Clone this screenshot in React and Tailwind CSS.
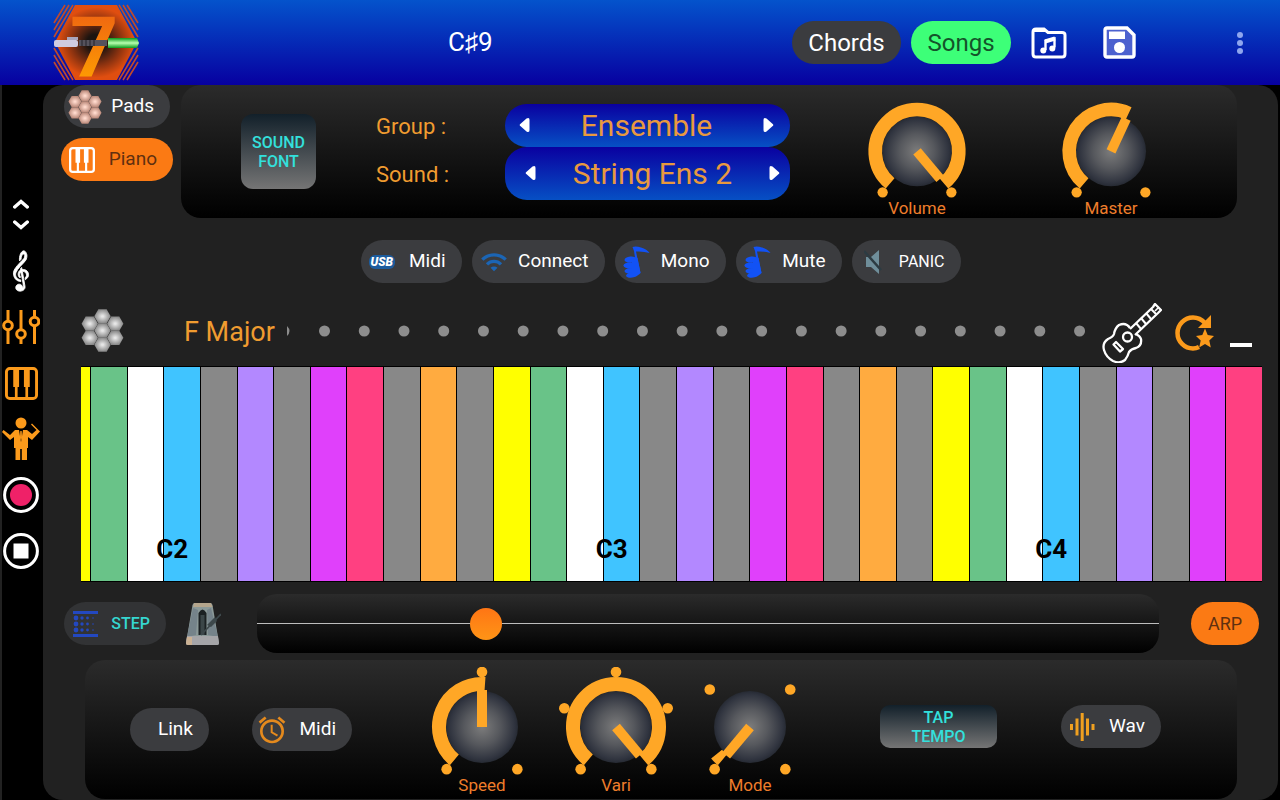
import { useState } from 'react';
import { MdAlarm, MdWifi } from 'react-icons/md';
import { GiGClef } from 'react-icons/gi';

const NOTE_COLORS = [
  'bg-[#69c388]',
  'bg-white',
  'bg-[#40c4ff]',
  'bg-[#888888]',
  'bg-[#b388ff]',
  'bg-[#888888]',
  'bg-[#e040fb]',
  'bg-[#ff4081]',
  'bg-[#888888]',
  'bg-[#ffab40]',
  'bg-[#888888]',
  'bg-[#ffff00]'
];

const KEYS = Array.from({ length: 32 }, (_, i) => ({
  id: i,
  color: NOTE_COLORS[i % 12],
  label: i % 12 === 2 ? `C${2 + Math.floor(i / 12)}` : null
}));

const polar = (angle, r) => {
  const rad = (angle * Math.PI) / 180;
  return [Math.sin(rad) * r, -Math.cos(rad) * r];
};

// Rotary knob, angles in degrees clockwise from the top
function Knob({ label, end, pointer = end, ticks }) {
  const [x1, y1] = polar(-140, 43);
  const [x2, y2] = polar(end, 43);
  const large = end + 140 > 180 ? 1 : 0;
  return (
    <label className="relative flex w-[116px] flex-col items-center text-[17px] leading-5 text-[#ee7d2b]">
      <input type="range" min="-140" max="140" defaultValue={Math.round(end)} className="sr-only" />
      <svg className="h-[108px] w-[116px]" viewBox="-58 -60 116 108">
        <defs>
          <radialGradient id={`knob-${label}`}>
            <stop offset="0" stopColor="#7c7c7c" />
            <stop offset="0.5" stopColor="#56585d" />
            <stop offset="0.9" stopColor="#30343f" />
            <stop offset="1" stopColor="#262a33" />
          </radialGradient>
        </defs>
        <circle r="36" fill={`url(#knob-${label})`} />
        <path d={`M${x1} ${y1}A43 43 0 ${large} 1 ${x2} ${y2}`} fill="none" stroke="#ffa726" strokeWidth="14" />
        <path d="M-5 0V-37H5V0Z" fill="#ffa726" transform={`rotate(${pointer})`} />
        {ticks.map((t) => {
          const [cx, cy] = polar(t, 55);
          return <circle key={t} cx={cx} cy={cy} r="5.300" fill="#ffa726" />;
        })}
      </svg>
      {label}
    </label>
  );
}

function Chip({ children, icon, className = '' }) {
  return (
    <button className={`flex h-[43px] shrink-0 items-center justify-between rounded-full pr-4 pl-2 text-[19px] ${className}`}>
      {icon}
      {children}
    </button>
  );
}

function Spinner({ value, name, className }) {
  return (
    <div className={`flex items-center justify-between rounded-[22px] bg-linear-to-b/srgb from-[#0a00a0] to-[#0650c4] text-3xl text-[#e8993f] ${className}`}>
      <button aria-label={`Previous ${name}`}>
        <svg className="h-4 w-3" viewBox="0 0 12 16" fill="#fff">
          <path d="M1 7.200 7.500 1.600Q10.500 0 10.500 3V13Q10.500 16 7.500 14.400L1 8.800Q.3 8 1 7.200Z" />
        </svg>
      </button>
      <span className="pt-0.5">{value}</span>
      <button aria-label={`Next ${name}`}>
        <svg className="h-4 w-3" viewBox="0 0 12 16" fill="#fff">
          <path d="M11 7.200 4.500 1.600Q1.500 0 1.500 3V13Q1.500 16 4.500 14.400L11 8.800Q11.700 8 11 7.200Z" />
        </svg>
      </button>
    </div>
  );
}

function Logo() {
  return (
    <svg className="h-[76px] w-[86px] overflow-visible" viewBox="0 0 86 76">
      <defs>
        <radialGradient id="logo-bg" cx="0.5" cy="0.5" r="0.55">
          <stop offset="0.2" stopColor="#1c1410" />
          <stop offset="0.55" stopColor="#8a3210" />
          <stop offset="0.85" stopColor="#e04e10" />
        </radialGradient>
        <linearGradient id="logo-num" x1="0" y1="0" x2="0" y2="1">
          <stop offset="0.2" stopColor="#f06a10" />
          <stop offset="0.9" stopColor="#ffa200" />
        </linearGradient>
        <linearGradient id="logo-blade" x1="0" y1="0" x2="0" y2="1">
          <stop offset="0" stopColor="#0b9a1c" />
          <stop offset="0.5" stopColor="#b8ffb0" />
          <stop offset="1" stopColor="#0b9a1c" />
        </linearGradient>
      </defs>
      <g stroke="#c24a2a" strokeWidth="1.600">
        <path d="M1 18 12 0M1 25 16 0M1 32 20 0M85 18 74 0M85 25 70 0M85 32 66 0" />
        <path d="M1 57 12 75M1 50 16 75M1 43 20 75M85 57 74 75M85 50 70 75M85 43 66 75" />
      </g>
      <path d="M22 0H64L84 37 64 75H22L2 37Z" fill="url(#logo-bg)" />
      <path d="M55 33H84L86 38 84 43H55Z" fill="url(#logo-blade)" />
      <text x="17" y="71" fontSize="84" fontWeight="700" fontFamily="Roboto, sans-serif" fill="url(#logo-num)">7</text>
      <rect x="1" y="35" width="24" height="7" rx="2" fill="#cfcbe0" />
      <rect x="14" y="32" width="11" height="3" fill="#a9a6bd" />
      <rect x="26" y="35" width="28" height="6" fill="#55525c" />
      <path d="M29 35v6M33 35v6M37 35v6M41 35v6" stroke="#25232a" />
    </svg>
  );
}

const HEX_CELLS = [[22, 7.500], [9, 15], [35, 15], [22, 22], [9, 29.500], [35, 29.500], [22, 36.500]];

function Hexes({ id, light, dark, className }) {
  return (
    <svg className={className} viewBox="0 0 44 44">
      <defs>
        <radialGradient id={id}>
          <stop offset="0.1" stopColor={light} />
          <stop offset="1" stopColor={dark} />
        </radialGradient>
      </defs>
      {HEX_CELLS.map(([x, y]) => (
        <path key={`${x}-${y}`} d="M-8.400 0-4.200-7.300H4.200L8.400 0 4.200 7.300H-4.200Z" transform={`translate(${x} ${y})`} fill={`url(#${id})`} />
      ))}
    </svg>
  );
}

function NoteHand() {
  return (
    <svg className="h-8 w-[27px]" viewBox="0 0 27 32" fill="#1252f5">
      <path d="M9.500 1Q13 0 18 1.500 24 3 26.500 7 20 5 13 5.500L17.500 27 14.500 28 11 5Z" />
      <ellipse cx="7.500" cy="13.500" rx="6" ry="3" transform="rotate(-6 7.500 13.500)" />
      <ellipse cx="7.500" cy="19.500" rx="7" ry="3.200" />
      <ellipse cx="8" cy="25" rx="6.500" ry="3" />
      <ellipse cx="9" cy="29" rx="6" ry="2.600" transform="rotate(-8 9 29)" />
      <path d="M9 12H14.500L17.500 27Q15 30 9 31Z" />
    </svg>
  );
}

function PianoIcon({ className }) {
  return (
    <svg className={className} viewBox="0 0 34 34">
      <rect x="1.500" y="1.500" width="31" height="31" rx="3.500" fill="none" stroke="currentColor" strokeWidth="3" />
      <path d="M8.500 2H14.500V20.500H13V32H10.200V20.500H8.500ZM19.500 2H25.500V20.500H23.800V32H21V20.500H19.500Z" fill="currentColor" />
    </svg>
  );
}

function SideBar() {
  return (
    <nav className="flex w-[43px] shrink-0 flex-col items-center border-l-2 border-[#222] bg-black pt-[102px] pr-[3px] text-[#fb9a1b]">
      <div className="flex h-14 flex-col items-center justify-center gap-2.5">
        <button aria-label="Up">
          <svg className="block h-3 w-4" viewBox="0 0 16 12" fill="none" stroke="#fff" strokeWidth="3.400">
            <path d="M1.700 9 8 3.500 14.300 9" strokeLinecap="round" />
          </svg>
        </button>
        <button aria-label="Down">
          <svg className="block h-3 w-4" viewBox="0 0 16 12" fill="none" stroke="#fff" strokeWidth="3.400">
            <path d="M1.700 2 8 7.500 14.300 2" strokeLinecap="round" />
          </svg>
        </button>
      </div>
      <button className="flex h-14 items-center text-white" aria-label="Notation">
        <GiGClef className="size-11" stroke="currentColor" strokeWidth="10" />
      </button>
      <button className="flex h-14 items-center" aria-label="Mixer">
        <svg className="h-9 w-[38px]" viewBox="0 0 38 36" fill="none" stroke="currentColor" strokeWidth="3">
          <path d="M6 1V12M6 21V35M19 1V20.500M19 29.500V35M32.500 1V8M32.500 17V35" />
          <circle cx="6" cy="16.500" r="4.300" />
          <circle cx="19" cy="25" r="4.300" />
          <circle cx="32.500" cy="12.500" r="4.300" />
        </svg>
      </button>
      <button className="flex h-14 items-center" aria-label="Keyboard">
        <PianoIcon className="size-[33px]" />
      </button>
      <button className="flex h-14 items-center" aria-label="Conductor">
        <svg className="h-11 w-10" viewBox="0 0 40 44" fill="currentColor">
          <circle cx="20" cy="6" r="5.500" />
          <path d="M14 13H26L31 17 35.500 13 30 7.500 31 6.500 38 13.500 39 14.500 31 23 27 20V31H26V43H20.800V32H19.200V43H14.500V31H13V20L9 23 1 15 2.500 13 9 18Z" />
          <path d="M18 13H22L20 25Z" fill="#000" />
          <path d="M19.300 14H20.700L21 21 20 23.500 19 21Z" />
        </svg>
      </button>
      <button className="flex h-14 items-center" aria-label="Record">
        <svg className="size-9" viewBox="0 0 36 36">
          <circle cx="18" cy="18" r="16.400" fill="none" stroke="#fff" strokeWidth="3" />
          <circle cx="18" cy="18" r="11" fill="#ef2168" />
        </svg>
      </button>
      <button className="flex h-14 items-center" aria-label="Stop">
        <svg className="size-9" viewBox="0 0 36 36">
          <circle cx="18" cy="18" r="16.400" fill="none" stroke="#fff" strokeWidth="3" />
          <path d="M10.500 10.500H25.500V25.500H10.500Z" fill="#fff" />
        </svg>
      </button>
    </nav>
  );
}

function TopBar() {
  return (
    <header className="flex h-[85px] items-center bg-linear-to-b/srgb from-[#0453cc] to-[#0700a0] pr-7 pl-[53px]">
      <Logo />
      <h1 className="ml-[309px] text-[26px] text-white">C♯9</h1>
      <div className="ml-auto flex items-center gap-2.5">
        <button className="h-[43px] w-[109px] rounded-full bg-[#3b3c3f] text-2xl text-white">Chords</button>
        <button className="h-[43px] w-[100px] rounded-full bg-[#3dff78] text-2xl text-[#14532a]">Songs</button>
        <button className="ml-2.5" aria-label="Open song">
          <svg className="h-8 w-9" viewBox="0 0 36 32" fill="none" stroke="#fff" strokeWidth="3">
            <path d="M2 5V27Q2 30 5 30H31Q34 30 34 27V8Q34 5.500 31 5.500H17L13 2H5Q2 2 2 5Z" />
            <path d="M2 5V3Q2 1 4 1H12L16 5Z" fill="#fff" stroke="none" />
            <path d="M14.500 23V14L23.500 11.500V20.500" strokeWidth="2.400" />
            <path d="M14 14.500 24 11.500" strokeWidth="4" />
            <circle cx="12.300" cy="23.500" r="3" fill="#fff" stroke="none" />
            <circle cx="21.300" cy="21.500" r="3" fill="#fff" stroke="none" />
          </svg>
        </button>
        <button className="ml-[26px]" aria-label="Save">
          <svg className="h-[33px] w-[33px]" viewBox="0 0 33 33">
            <path d="M4 2H24L31 9V29Q31 31 29 31H4Q2 31 2 29V4Q2 2 4 2Z" fill="#4c61cf" stroke="#fff" strokeWidth="3.400" />
            <path d="M6 5.500H22V13H6Z" fill="#fff" />
            <circle cx="16.500" cy="21.500" r="5.500" fill="#fff" />
          </svg>
        </button>
        <button className="ml-[82px]" aria-label="More">
          <svg className="h-6 w-6" viewBox="0 0 24 24" fill="#8fa6ee">
            <circle cx="12" cy="4" r="3" />
            <circle cx="12" cy="12" r="3" />
            <circle cx="12" cy="20" r="3" />
          </svg>
        </button>
      </div>
    </header>
  );
}

function SoundPanel() {
  return (
    <section className="flex">
      <div className="flex w-[138px] flex-col items-center gap-2.5 pl-[10px]">
        <Chip className="w-[106px] bg-[#3b3c3f] text-white" icon={<Hexes id="pads" light="#ffd9cc" dark="#b98778" className="-ml-1 size-[34px]" />}>
          Pads
        </Chip>
        <Chip className="w-[112px] bg-[#fb7a14] text-[#5f3010]" icon={<PianoIcon className="size-[26px] text-white" />}>
          Piano
        </Chip>
      </div>
      <div className="mr-[41px] flex h-[133px] flex-1 justify-between rounded-[20px] bg-linear-to-b/srgb from-[#2b2b2b] to-black pr-[68px] pl-[60px]">
        <div className="flex items-center gap-[60px]">
          <button className="h-[75px] w-[75px] rounded-xl bg-linear-to-b/srgb from-[#12202a] to-[#757575] text-base leading-[19px] font-medium text-[#33e0dc]">
            SOUND
            <br />
            FONT
          </button>
          <div className="flex flex-col text-[#f09c30]">
            <div className="flex items-center">
              <span className="w-[129px] pt-0.5 text-[22px]">Group :</span>
              <Spinner name="group" value="Ensemble" className="h-[43px] w-[285px] pr-4 pl-3.5" />
            </div>
            <div className="flex items-center">
              <span className="w-[129px] pt-0.5 text-[22px]">Sound :</span>
              <Spinner name="sound" value="String Ens 2" className="h-[53px] w-[285px] pr-2.5 pl-5" />
            </div>
          </div>
        </div>
        <div className="flex gap-[78px] pt-2">
          <Knob label="Volume" end={140} ticks={[-140, 140]} />
          <Knob label="Master" end={25} ticks={[-140, 140]} />
        </div>
      </div>
    </section>
  );
}

function MidiRow() {
  return (
    <div className="mt-[22px] flex justify-center gap-2.5 text-white">
      <Chip
        className="w-[101px] bg-[#3b3c3f]"
        icon={<span className="rounded-md bg-[#1c5c9e] px-0.5 text-xs leading-[14px] font-black italic">USB</span>}
      >
        Midi
      </Chip>
      <Chip className="w-[133px] bg-[#3b3c3f]" icon={<MdWifi className="size-7 text-[#1b65b5]" />}>
        Connect
      </Chip>
      <Chip className="w-[111px] bg-[#3b3c3f]" icon={<NoteHand />}>
        Mono
      </Chip>
      <Chip className="w-[106px] bg-[#3b3c3f]" icon={<NoteHand />}>
        Mute
      </Chip>
      <button className="flex h-[43px] w-[109px] items-center justify-between rounded-full bg-[#3b3c3f] pr-4 pl-3 text-base">
        <svg className="h-6 w-[18px]" viewBox="0 0 18 24" fill="#6f8e9a">
          <path d="M2 7H7L15 0V24L7 17H2Z" />
          <path d="M0 1 17 20" stroke="#2c3b42" strokeWidth="2.500" />
        </svg>
        PANIC
      </button>
    </div>
  );
}

function ScaleRow() {
  return (
    <div className="flex h-[83px] items-center pt-3 pr-[22px] pl-[38px]">
      <Hexes id="scale" light="#e6e6e6" dark="#868686" className="size-[43px]" />
      <span className="ml-[60px] w-[98px] pt-1 text-[27px] text-[#f09c30]">F Major</span>
      <svg className="h-3 min-w-0 flex-1" viewBox="0 0 802 12" fill="#8d8d8d">
        <path d="M3 1Q8 6 3 11Z" />
        {Array.from({ length: 20 }, (_, i) => (
          <circle key={i} cx={40.500 + i * 39.740} cy="6" r="5.500" />
        ))}
      </svg>
      <div className="flex items-center gap-3 pt-1 pl-3.5">
        <button aria-label="Guitar">
          <svg className="h-[60px] w-[60px]" viewBox="0 0 60 60" fill="none" stroke="#fff" strokeWidth="2.300" strokeLinejoin="round">
            <path d="M28 25Q24 19 17 22 13 25 12 31 11 34 6 36 0 40 2 47 4 54 11 58 18 61 23 57 26 53 27 49 29 46 34 45 40 43 39 36 38 33 34 31" />
            <path d="M28 26 51 4 53 1 59 7 56 10 33 32" />
            <circle cx="25.500" cy="34" r="4.500" />
            <path d="M34 20 39 26M39 15 44 21M44 10 49 16M49 6 54 11" strokeWidth="2" />
            <path d="M53 8 56 5" strokeWidth="1.600" />
            <path d="M14 39 21 46 18 48.500 11.500 41.500Z" />
          </svg>
        </button>
        <button aria-label="Reset favourites">
          <svg className="h-[38px] w-10" viewBox="0 0 40 38">
            <path d="M31 9Q26 3.500 19 3.500A15.500 15.500 0 0 0 19 34.500Q22 34.500 25 33" fill="none" stroke="#fb9a1b" strokeWidth="4.500" />
            <path d="M37 1V14H24Z" fill="#fb9a1b" />
            <path d="M31 14.500 33.700 21 40 22 35.300 26.500 36.800 33.500 31 30 25.200 33.500 26.700 26.500 22 22 28.300 21Z" fill="#fb9a1b" />
          </svg>
        </button>
        <button className="flex h-7 w-[30px] items-end pl-1" aria-label="Minimise">
          <span className="h-1 w-[22px] bg-white" />
        </button>
      </div>
    </div>
  );
}

function Keyboard() {
  return (
    <div className="mr-4 ml-[38px] flex h-[216px] gap-px border-y border-black bg-black">
      <button className="w-[9px] shrink-0 bg-[#ffff00]" aria-label="B1" />
      {KEYS.map((k) => (
        <button key={k.id} className={`relative flex-1 ${k.color}`} aria-label={k.label || `Key ${k.id + 1}`}>
          {k.label && <span className="absolute bottom-3 -left-2 text-[26px] font-bold text-black">{k.label}</span>}
        </button>
      ))}
    </div>
  );
}

function TempoRow() {
  const [tempo, setTempo] = useState(245);
  return (
    <div className="flex items-center pt-3 pr-[19px] pl-[21px]">
      <button className="flex h-[43px] w-[102px] items-center justify-between rounded-full bg-[#323335] pr-4 pl-2 text-base font-medium text-[#35d6d0]">
        <svg className="h-[26px] w-[26px]" viewBox="0 0 26 26" fill="#2348c0">
          <path d="M1 0H26V3H1ZM1 23H26V26H1Z" />
          {[7, 13, 19].map((y) => (
            <g key={y}>
              <circle cx="4" cy={y} r="2.400" />
              <circle cx="10" cy={y} r="1.700" />
              <circle cx="15.500" cy={y} r="1.400" />
              <circle cx="21" cy={y} r="0.800" />
            </g>
          ))}
        </svg>
        STEP
      </button>
      <button className="ml-5" aria-label="Metronome">
        <svg className="h-[42px] w-[35px]" viewBox="0 0 35 42">
          <path d="M9 0H24Q26 0 26.500 2L33 40Q33 42 31 42H2Q0 42 0 40L6.500 2Q7 0 9 0Z" fill="#8b9998" />
          <path d="M8 0H25L26.500 4H7Z" fill="#b4a58c" />
          <path d="M7 5 12 7 10 32 1 34ZM25 5 21 7 22 32 32 34Z" fill="#75838a" />
          <path d="M12.500 10Q16.500 3 20.500 10V32H12.500Z" fill="#1b2123" />
          <path d="M14.500 12H18.500V32H14.500Z" fill="#3b4648" />
          <path d="M1 33H32L33 40Q33 42 31 42H2Q0 42 0 40Z" fill="#a5a5a8" />
          <path d="M1 34H6V42H2Q0 42 0 40Z" fill="#cbb193" />
          <path d="M15 32 35 11" stroke="#3d484b" strokeWidth="1.800" />
          <path d="M21 22 29 14 31 18 25 24Z" fill="#3d484b" />
        </svg>
      </button>
      <div className="mr-8 ml-9 flex h-[59px] flex-1 items-center rounded-[20px] bg-linear-to-b/srgb from-[#2b2b2b] to-black">
        <input
          type="range"
          aria-label="Tempo"
          min="0"
          max="1000"
          value={tempo}
          onChange={(e) => setTempo(e.target.value)}
          className="h-8 w-full appearance-none bg-[linear-gradient(#bdbdbd,#bdbdbd)] bg-[length:100%_1px] bg-center bg-no-repeat [&::-webkit-slider-thumb]:size-8 [&::-webkit-slider-thumb]:appearance-none [&::-webkit-slider-thumb]:rounded-full [&::-webkit-slider-thumb]:bg-linear-to-b [&::-webkit-slider-thumb]:from-[#ff7514] [&::-webkit-slider-thumb]:to-[#ff9416]"
        />
      </div>
      <button className="h-[43px] w-[68px] rounded-full bg-[#fb7a14] text-lg text-[#5f3010]">ARP</button>
    </div>
  );
}

function ArpPanel() {
  return (
    <section className="mt-[7px] mr-[41px] ml-[42px] flex h-[139px] justify-between rounded-[20px] bg-linear-to-b/srgb from-[#2b2b2b] to-black pr-[76px] pl-[45px]">
      <div className="flex items-center gap-[43px] text-white">
        <Chip className="w-[79px] bg-[#3b3c3f]" icon={<span />}>
          Link
        </Chip>
        <Chip className="w-[100px] bg-[#3b3c3f]" icon={<MdAlarm className="-ml-1 size-8 text-[#e58a1d]" />}>
          Midi
        </Chip>
      </div>
      <div className="flex gap-[18px] pt-[7px]">
        <Knob label="Speed" end={4} pointer={0} ticks={[-140, 0, 140]} />
        <Knob label="Vari" end={140} ticks={[-140, -70, 0, 70, 140]} />
        <Knob label="Mode" end={-129} pointer={-140} ticks={[-140, -47, 47, 140]} />
      </div>
      <div className="flex items-center gap-16 pb-1.5">
        <button className="h-[43px] w-[117px] rounded-[10px] bg-linear-to-b/srgb from-[#12202a] to-[#757575] text-base leading-[19px] font-medium text-[#33e0dc]">
          TAP
          <br />
          TEMPO
        </button>
        <Chip
          className="w-[100px] bg-[#3b3c3f] text-white"
          icon={
            <svg className="h-7 w-[26px]" viewBox="0 0 26 28" stroke="#f0a020" strokeWidth="3">
              <path d="M2.500 11V17M8 5.500V22.500M13.200 0V28M18.500 5.500V22.500M24 11V17" />
            </svg>
          }
        >
          Wav
        </Chip>
      </div>
    </section>
  );
}

export default function App() {
  return (
    <div className="flex min-h-screen flex-col bg-black font-[Roboto,sans-serif]">
      <TopBar />
      <div className="flex flex-1">
        <SideBar />
        <main className="mr-0.5 min-w-0 flex-1 rounded-[20px] bg-[#212121]">
          <SoundPanel />
          <MidiRow />
          <ScaleRow />
          <Keyboard />
          <TempoRow />
          <ArpPanel />
        </main>
      </div>
    </div>
  );
}
